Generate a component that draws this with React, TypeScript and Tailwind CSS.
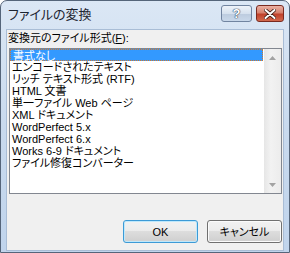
import React from "react";

const formats = [
  "書式なし",
  "エンコードされたテキスト",
  "リッチ テキスト形式 (RTF)",
  "HTML 文書",
  "単一ファイル Web ページ",
  "XML ドキュメント",
  "WordPerfect 5.x",
  "WordPerfect 6.x",
  "Works 6-9 ドキュメント",
  "ファイル修復コンバーター",
];

const font =
  "font-['Liberation_Sans','Noto_Sans_CJK_JP',sans-serif] [font-feature-settings:'palt']";

function Arrow({ up }: { up?: boolean }) {
  return (
    <div className="flex h-[17px] w-[17px] items-center justify-center">
      <svg width="7" height="4" viewBox="0 0 7 4">
        <path d={up ? "M0 4 L3.5 0 L7 4 Z" : "M0 0 L3.5 4 L7 0 Z"} fill="#a3a3a3" />
      </svg>
    </div>
  );
}

function DialogButton({ label, primary }: { label: string; primary?: boolean }) {
  return (
    <button
      className={`flex h-[23px] w-[75px] items-center justify-center rounded-[3px] border text-[11px] leading-[12px] text-black ${
        primary
          ? "border-[#3c9ad6] shadow-[inset_0_0_0_1px_#bfe8fb]"
          : "border-[#707070] shadow-[inset_0_0_0_1px_#fbfbfb]"
      } bg-[linear-gradient(#f2f2f2_0%,#ebebeb_50%,#dddddd_50%,#cfcfcf_100%)]`}
    >
      {label}
    </button>
  );
}

export default function App() {
  const [selected, setSelected] = React.useState(0);

  return (
    <div
      className={`flex h-[253px] w-[290px] flex-col rounded-t-[7px] border border-[#55657a] bg-gradient-to-b from-[#dbe7f5] via-[#c9daee] to-[#c0d4ec] ${font}`}
    >
      {/* title bar */}
      <div className="flex h-[28px] items-start pr-[5px] pt-[4px]">
        <div className="pl-[7px] pt-[2px] text-[13px] leading-[15px] text-[#1c2430]">
          ファイルの変換
        </div>
        <div className="ml-auto flex gap-[4px]">
          <div className="flex h-[17px] w-[31px] items-center justify-center rounded-[3px] border border-[#7184a0] bg-[linear-gradient(#eef3f9_0%,#d6e1ee_50%,#bccbde_51%,#c9d8ea_100%)]">
            <span className="text-[13px] font-bold leading-[13px] text-white [text-shadow:0_0_1px_#33435a,0_0_1px_#33435a,0_0_1px_#33435a]">
              ?
            </span>
          </div>
          <div className="flex h-[17px] w-[28px] items-center justify-center rounded-[3px] border border-[#7a2a20] bg-[linear-gradient(#eab1a4_0%,#d7826f_45%,#c1412b_55%,#d2694e_100%)]">
            <svg width="12" height="10" viewBox="0 0 12 10">
              <path
                d="M1.5 1 L10.5 9 M10.5 1 L1.5 9"
                stroke="#3a1712"
                strokeWidth="3.6"
                strokeLinecap="round"
              />
              <path
                d="M1.5 1 L10.5 9 M10.5 1 L1.5 9"
                stroke="#ffffff"
                strokeWidth="2"
                strokeLinecap="round"
              />
            </svg>
          </div>
        </div>
      </div>

      {/* client area */}
      <div className="mx-[5px] mb-[1px] flex flex-1 flex-col border border-[#a9bdd6] bg-[#f0f0f0] pt-[1px] text-[11px] text-black">
        <div className="h-[14px] pl-[1px] leading-[14px]">
          変換元のファイル形式(<span className="underline">F</span>):
        </div>

        <div className="ml-[2px] mr-[1px] mt-[3px] flex h-[146px] border border-[#828790] bg-white">
          <div className="flex-1 pr-[1px]">
            {formats.map((f, i) => (
              <div
                key={f}
                onClick={() => setSelected(i)}
                className={`h-[12px] whitespace-nowrap pl-[2px] leading-[12px] ${
                  i === selected
                    ? "border border-dotted border-[#d0782c] bg-[#3399ff] pl-[1px] leading-[10px] text-white"
                    : ""
                }`}
              >
                {f}
              </div>
            ))}
          </div>
          <div className="flex w-[17px] flex-col justify-between bg-[linear-gradient(90deg,#e6e6e6,#f2f2f2_40%,#ececec)]">
            <Arrow up />
            <Arrow />
          </div>
        </div>

        <div className="mr-[1px] mt-[26px] flex justify-end gap-[9px]">
          <DialogButton label="OK" primary />
          <DialogButton label="キャンセル" />
        </div>
      </div>
    </div>
  );
}
